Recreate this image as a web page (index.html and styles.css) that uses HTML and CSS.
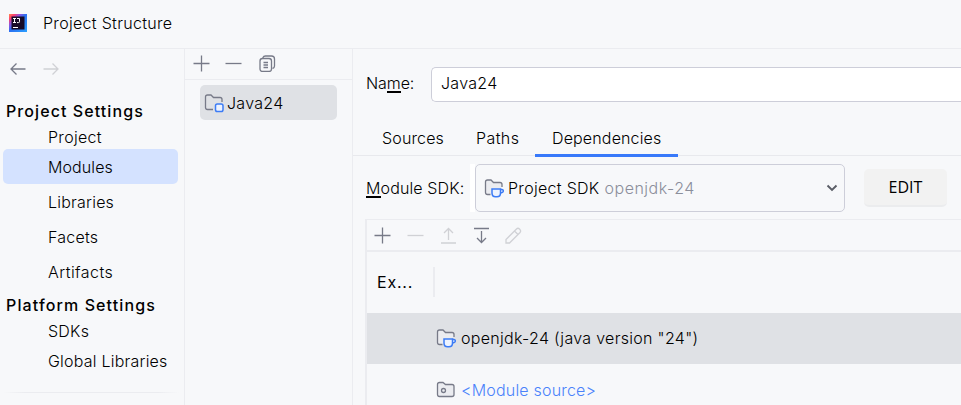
FILE: index.html
```html
<!DOCTYPE html>
<html lang="en">
<head>
<meta charset="utf-8">
<title>Project Structure</title>
<link rel="stylesheet" href="styles.css">
</head>
<body>
<div class="window">
  <header class="titlebar">
    <svg class="logo" width="18" height="18" viewBox="0 0 18 18">
      <defs>
        <linearGradient id="logo-edge" x1="0" y1="0" x2="1" y2="1"><stop offset="0" stop-color="#ff8a4c"/><stop offset=".16" stop-color="#fe3f6c"/><stop offset=".32" stop-color="#8a55e0"/><stop offset=".48" stop-color="#2b6ff0"/><stop offset="1" stop-color="#2aa0ff"/></linearGradient>
      </defs>
      <rect width="18" height="18" fill="url(#logo-edge)"/>
      <rect x="2.500" y="2.500" width="13" height="13" fill="#160a26"/>
      <path d="M4 4.500h3M5.500 4.500v4M4 8.500h3M8 4.500h2.500v3.200q0 .9-1 .9H8M4 13.500h5" fill="none" stroke="#fff" stroke-width="1"/>
    </svg>
    <span class="title">Project Structure</span>
  </header>
  <div class="panes">
    <nav class="sidebar">
      <div class="history">
        <svg width="16" height="14" viewBox="0 0 16 14" class="ic"><path d="M15.500 7H1M6.500 1.500L1 7l5.500 5.500"/></svg>
        <svg width="16" height="14" viewBox="0 0 16 14" class="ic off"><path d="M.5 7H15M9.500 1.500L15 7l-5.500 5.500"/></svg>
      </div>
      <h2 class="group">Project Settings</h2>
      <a class="item first">Project</a>
      <a class="item active">Modules</a>
      <a class="item">Libraries</a>
      <a class="item">Facets</a>
      <a class="item artifacts">Artifacts</a>
      <h2 class="group platform">Platform Settings</h2>
      <a class="item short">SDKs</a>
      <a class="item short global">Global Libraries</a>
      <div class="divider"></div>
    </nav>
    <section class="modules">
      <div class="module-tools">
        <svg width="17" height="17" viewBox="0 0 17 17" class="ic"><path d="M8.500.5v16M.5 8.500h16"/></svg>
        <svg width="17" height="17" viewBox="0 0 17 17" class="ic"><path d="M.5 8.500h16"/></svg>
        <svg width="17" height="17" viewBox="0 0 17 17" class="ic copy"><rect x="1" y="3.500" width="11.500" height="13" rx="2.500"/><path d="M4 3V2.500Q4.500 1 6.500 1H12.500Q15.500 1 15.500 4V11Q15.500 13 13.500 13.500M4.500 7.500h4.500M4.500 10h4.500M4.500 12.500h4.500"/></svg>
      </div>
      <div class="module">
        <svg width="20" height="20" viewBox="0 0 20 20" class="ic"><path d="M9 16.500H3.500Q1.500 16.500 1.500 14.500V4Q1.500 2 3.500 2H7L9.500 4.500H16Q18 4.500 18 6.500V9"/><rect class="blue" x="11.500" y="11" width="7.500" height="7.500" rx="1.800"/></svg>
        <span class="module-name">Java24</span>
      </div>
    </section>
    <main class="details">
      <div class="name-row"><label class="name-label">Na<span class="mnemonic">m</span>e:</label><div class="input">Java24</div></div>
      <div class="tabs"><span class="tab sources">Sources</span><span class="tab paths">Paths</span><span class="tab selected">Dependencies</span></div>
      <div class="sdk-row">
        <label class="sdk-label"><span class="mnemonic">M</span>odule SDK:</label>
        <div class="select-wrap"><div class="select">
          <svg width="20" height="20" viewBox="0 0 20 20" class="ic"><path fill="#ebecf0" d="M6.500 16.500H3.500Q1.500 16.500 1.500 14.500V4Q1.500 2 3.500 2H7L9.500 4.500H16Q18 4.500 18 6.500V9"/><path class="blue" d="M16 11.500H18Q19.300 11.500 19.300 13T17.500 14.800H16"/><path class="blue" d="M8 11h8.500v4Q16.500 18.800 13 18.800H11.500Q8 18.800 8 15Z"/></svg>
          <span class="sdk-name">Project SDK</span><span class="sdk-version">openjdk-24</span>
          <svg class="chevron" width="12" height="8" viewBox="0 0 12 8"><path d="M1.500 1.500L6 6L10.500 1.500"/></svg>
        </div></div>
        <button class="edit">EDIT</button>
      </div>
      <div class="table">
        <div class="table-tools">
          <svg width="17" height="17" viewBox="0 0 17 17" class="ic"><path d="M8.500.5v16M.5 8.500h16"/></svg>
          <svg width="17" height="17" viewBox="0 0 17 17" class="ic off"><path d="M.5 8.500h16"/></svg>
          <svg width="17" height="17" viewBox="0 0 17 17" class="ic off"><path d="M8.500 13V1.500M4 6L8.500 1.500L13 6M1 16h15"/></svg>
          <svg width="17" height="17" viewBox="0 0 17 17" class="ic"><path d="M8.500 4v11.500M4 11L8.500 15.500L13 11M1 1.500h15"/></svg>
          <svg width="17" height="17" viewBox="0 0 17 17" class="ic off pencil"><path d="M1 16V12.500L11.500 2Q13 .5 14.700 2.200T15 5.500L4.500 16ZM9.500 4L13 7.500"/></svg>
        </div>
        <div class="table-head"><span class="export">Ex...</span></div>
        <div class="row chosen">
          <svg width="20" height="20" viewBox="0 0 20 20" class="ic"><path fill="#ebecf0" d="M6.500 16.500H3.500Q1.500 16.500 1.500 14.500V4Q1.500 2 3.500 2H7L9.500 4.500H16Q18 4.500 18 6.500V9"/><path class="blue" d="M16 11.500H18Q19.300 11.500 19.300 13T17.500 14.800H16"/><path class="blue" d="M8 11h8.500v4Q16.500 18.800 13 18.800H11.500Q8 18.800 8 15Z"/></svg>
          <span class="jdk">openjdk-24 (java version "24")</span>
        </div>
        <div class="row">
          <svg width="20" height="20" viewBox="0 0 20 20" class="ic"><path fill="#ebecf0" d="M3.500 16.500Q1.500 16.500 1.500 14.500V4.500Q1.500 2.500 3.500 2.500H7L9.500 4.500H16Q18 4.500 18 6.500V14.500Q18 16.500 16 16.500Z"/><circle cx="7.500" cy="10.500" r="2"/></svg>
          <span class="source">&lt;Module source&gt;</span>
        </div>
      </div>
    </main>
  </div>
</div>
</body>
</html>
```

FILE: styles.css
```css
* { box-sizing: border-box; }
body { margin: 0; background: #f7f8fa; color: #000; font: 300 16px/20px Inter, sans-serif; letter-spacing: .3px; }
.window { width: 961px; height: 405px; overflow: hidden; white-space: nowrap; }
svg { display: block; flex: none; }
.ic { fill: none; stroke: #777a88; stroke-width: 1.3; }
.off { stroke: #d0d1d5; }
.blue { fill: #edf3ff; stroke: #3d7cf5; stroke-width: 1.5; }
.titlebar { display: flex; align-items: center; gap: 16px; height: 49px; padding: 0 9px 2px; border-bottom: 1px solid #ebecf0; }
.panes { display: flex; height: 356px; }
.sidebar { width: 185px; border-right: 1px solid #ebecf0; }
.history { display: flex; align-items: center; gap: 17px; height: 40px; padding-left: 10px; }
.group { height: 26px; margin: 9px 0 0 6px; font-size: 16px; line-height: 26px; font-weight: 500; letter-spacing: 1.08px; }
.item { display: block; height: 35px; padding-left: 48px; line-height: 35px; letter-spacing: .22px; }
.item.first { height: 25px; line-height: 26px; letter-spacing: .3px; }
.item.active { margin: 0 6px 1px 3px; padding-left: 45px; border-radius: 5px; background: #d4e2ff; line-height: 37px; letter-spacing: .1px; }
.item.artifacts { letter-spacing: .45px; }
.group.platform { margin-top: 0; height: 26px; line-height: 30px; letter-spacing: 1.12px; }
.item.short { height: 30px; line-height: 30px; }
.divider { width: 176px; height: 1px; margin: 16px 0 0 3px; background: linear-gradient(90deg, #f7f8fa, #ebecf0 12% 88%, #f7f8fa); }
.modules { width: 168px; border-right: 1px solid #ebecf0; }
.module-tools { display: flex; align-items: center; gap: 15px; height: 31px; padding: 0 8px 1px; border-bottom: 1px solid #ebecf0; }
.copy { margin-left: 2px; }
.module { display: flex; align-items: center; gap: 3px; width: 137px; height: 35px; margin: 5px 0 0 15px; padding: 0 0 0 4px; border-radius: 5px; background: #dfe1e5; }
.details { flex: 1; min-width: 0; }
.name-row { display: flex; align-items: center; height: 35px; margin: 18px 0 0 13px; }
.name-label { width: 65px; padding-bottom: 3px; letter-spacing: -.1px; }
.mnemonic { box-shadow: inset 0 -2px #000; }
.input { flex: 1; height: 35px; padding-left: 9px; border: 1px solid #cdced9; border-right: 0; border-radius: 5px 0 0 5px; background: #fff; line-height: 31px; letter-spacing: .3px; }
.tabs { display: flex; height: 54px; padding: 18px 0 0 13px; border-bottom: 1px solid #e8e9ed; }
.tab { height: 37px; padding: 0 16px; line-height: 37px; letter-spacing: .15px; }
.tab.sources { width: 94px; }
.tab.paths { width: 75px; letter-spacing: .4px; }
.tab.selected { width: 143px; padding-left: 17px; border-bottom: 3px solid #3879fa; }
.sdk-row { display: flex; height: 48px; margin: 8px 0 0 13px; }
.sdk-label { width: 104px; line-height: 20px; padding-top: 14px; letter-spacing: .12px; }
.select-wrap { width: 375px; padding: 0 0 0 5px; background: linear-gradient(90deg, #fff 5px, transparent 5px); }
.select { display: flex; align-items: center; width: 370px; height: 48px; padding: 0 7px 0 8px; border: 1.500px solid #cdced9; border-radius: 5px; }
.sdk-name { margin-left: 4px; }
.sdk-version { margin-left: 5px; color: #8b8e9b; letter-spacing: .5px; }
.chevron { margin-left: auto; margin-right: -1px; fill: none; stroke: #5a5d66; stroke-width: 1.900; }
.edit { width: 83px; height: 38px; margin: 5px 0 0 19px; padding: 0; border: 0; border-bottom: 2px solid #ebecee; border-radius: 5px; background: #f2f2f2; font: 400 16px/34px "Open Sans", sans-serif; color: #000; }
.table { height: 190px; margin: 7px 0 0 12px; border-top: 1px solid #ebecf0; border-left: 2px solid #ebecf0; }
.table-tools { display: flex; align-items: center; gap: 16px; height: 32px; padding: 0 0 0 7px; border-bottom: 2px solid #ebecf0; }
.pencil { margin-left: -1px; }
.table-head { height: 61px; padding-top: 15px; }
.export { display: block; width: 68px; height: 30px; padding-left: 10px; border-right: 2px solid #ebecf0; font-weight: 400; line-height: 31px; letter-spacing: .8px; }
.row { display: flex; align-items: center; gap: 5px; height: 51px; padding: 0 0 0 69px; }
.row.chosen { padding-bottom: 1px; background: #dfe1e5; }
.source { color: #4a82fa; letter-spacing: .2px; }
```
